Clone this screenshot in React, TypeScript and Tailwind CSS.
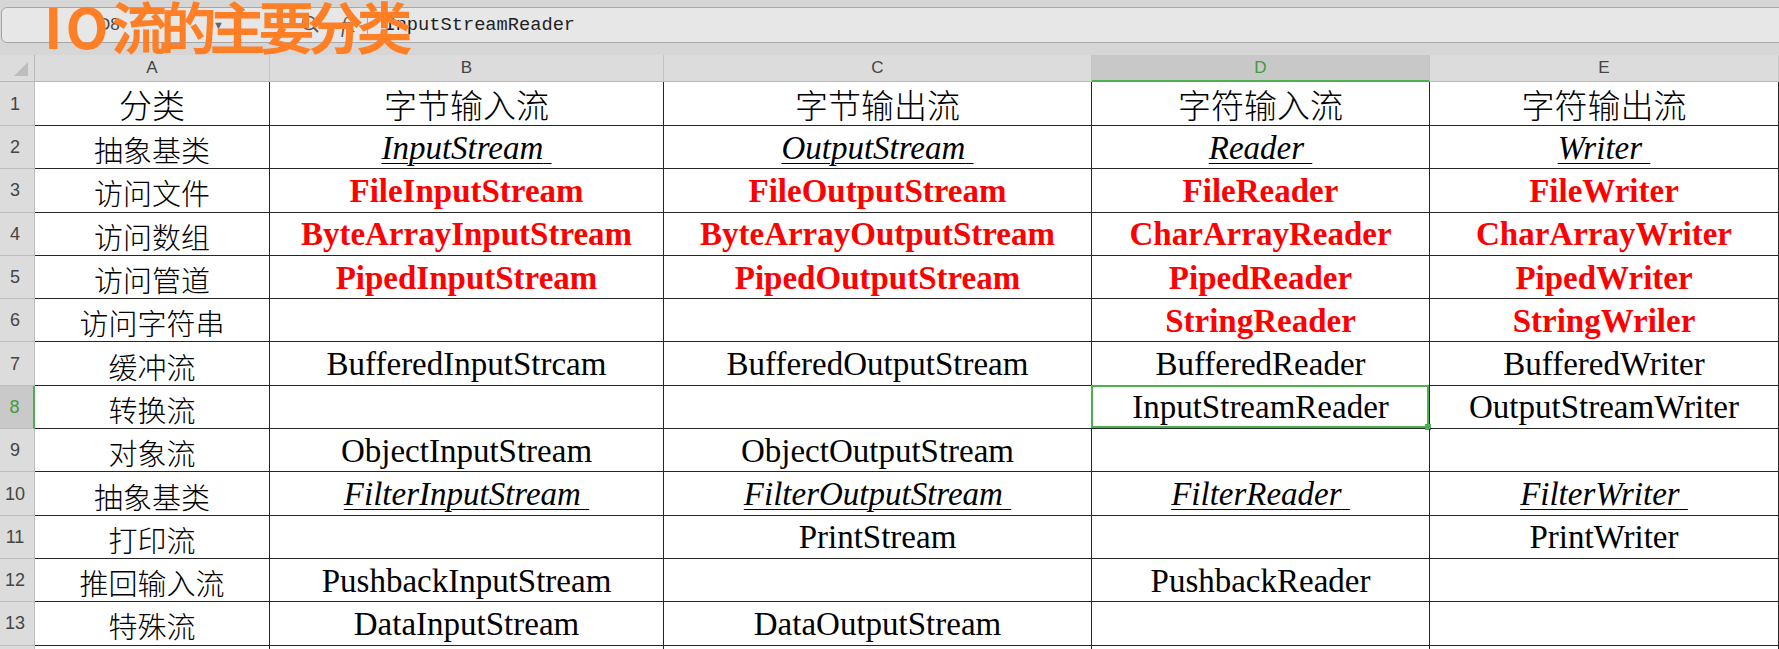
import React from "react";

type Cell = { t: string; s?: "red" | "ital" } | null;

// column widths (A..E) in the sheet
const COLS = ["w-[235px]", "w-[394px]", "w-[428px]", "w-[338px]", "w-[349px]"];

const HEAD = ["分类", "字节输入流", "字节输出流", "字符输入流", "字符输出流"];

const ROWS: Cell[][] = [
  [{ t: "抽象基类" }, { t: "InputStream", s: "ital" }, { t: "OutputStream", s: "ital" }, { t: "Reader", s: "ital" }, { t: "Writer", s: "ital" }],
  [{ t: "访问文件" }, { t: "FileInputStream", s: "red" }, { t: "FileOutputStream", s: "red" }, { t: "FileReader", s: "red" }, { t: "FileWriter", s: "red" }],
  [{ t: "访问数组" }, { t: "ByteArrayInputStream", s: "red" }, { t: "ByteArrayOutputStream", s: "red" }, { t: "CharArrayReader", s: "red" }, { t: "CharArrayWriter", s: "red" }],
  [{ t: "访问管道" }, { t: "PipedInputStream", s: "red" }, { t: "PipedOutputStream", s: "red" }, { t: "PipedReader", s: "red" }, { t: "PipedWriter", s: "red" }],
  [{ t: "访问字符串" }, null, null, { t: "StringReader", s: "red" }, { t: "StringWriler", s: "red" }],
  [{ t: "缓冲流" }, { t: "BufferedInputStrcam" }, { t: "BufferedOutputStream" }, { t: "BufferedReader" }, { t: "BufferedWriter" }],
  [{ t: "转换流" }, null, null, { t: "InputStreamReader" }, { t: "OutputStreamWriter" }],
  [{ t: "对象流" }, { t: "ObjectInputStream" }, { t: "ObjectOutputStream" }, null, null],
  [{ t: "抽象基类" }, { t: "FilterInputStream", s: "ital" }, { t: "FilterOutputStream", s: "ital" }, { t: "FilterReader", s: "ital" }, { t: "FilterWriter", s: "ital" }],
  [{ t: "打印流" }, null, { t: "PrintStream" }, null, { t: "PrintWriter" }],
  [{ t: "推回输入流" }, { t: "PushbackInputStream" }, null, { t: "PushbackReader" }, null],
  [{ t: "特殊流" }, { t: "DataInputStream" }, { t: "DataOutputStream" }, null, null],
];

function CellText({ c, first }: { c: Cell; first: boolean }) {
  if (!c) return null;
  if (first) return <span className="pt-[3px] font-['Noto_Sans_CJK_SC',sans-serif] text-[29px] font-light">{c.t}</span>;
  if (c.s === "red") return <span className="font-bold text-[#ff0000]">{c.t}</span>;
  if (c.s === "ital")
    return (
      <span className="italic underline decoration-1 underline-offset-[4px]">
        {c.t}
        {"\u00a0"}
      </span>
    );
  return <span>{c.t}</span>;
}

export default function App() {
  return (
    <div className="relative h-[649px] w-[1779px] overflow-hidden bg-white font-['Liberation_Sans',sans-serif]">
      {/* formula bar */}
      <div className="flex h-[55px] items-start bg-[#d6d6d6] pt-[7px]">
        <div className="ml-px flex h-[36px] w-[236px] items-center rounded-md border border-[#a5a5a5] bg-[#e7e7e7] pl-[96px] pr-3 text-[17px] text-[#444]">
          <span className="flex-1">D8</span>
          <span className="text-[11px] text-[#666]">▼</span>
        </div>
        <div className="flex h-[36px] flex-1 items-center border-y border-[#a9a9a9] bg-[#e7e7e7]">
          <svg width="20" height="20" viewBox="0 0 20 20" className="ml-[64px]">
            <circle cx="8" cy="8" r="6.5" fill="none" stroke="#555" strokeWidth="1.5" />
            <path d="M12.5 12.5 L17 17" stroke="#555" strokeWidth="1.8" />
          </svg>
          <span className="ml-[20px] font-['Liberation_Serif',serif] text-[20px] italic text-[#555]">fx</span>
          <div className="ml-[12px] h-[26px] w-px bg-[#a9a9a9]" />
          <span className="ml-[16px] font-['Liberation_Mono',monospace] text-[18.7px] text-[#222]">InputStreamReader</span>
        </div>
      </div>

      {/* column header */}
      <div className="flex h-[27px] text-[17px] text-[#444]">
        <div className="relative w-[35px] border-r border-b border-[#b8b8b8] bg-[#dcdcdc]">
          <svg width="14" height="14" viewBox="0 0 14 14" className="absolute right-[6px] bottom-[5px]">
            <polygon points="14,0 14,14 0,14" fill="#bdbdbd" />
          </svg>
        </div>
        {["A", "B", "C", "D", "E"].map((h, i) => (
          <div
            key={h}
            className={`${COLS[i]} flex items-center justify-center border-r border-[#c4c4c4] ${
              h === "D" ? "border-b-2 border-b-[#4caf50] bg-[#c8c8c8] text-[#3f9b3f]" : "border-b border-b-[#b8b8b8] bg-[#dcdcdc]"
            }`}
          >
            {h}
          </div>
        ))}
      </div>

      {/* sheet */}
      <div className="font-['Liberation_Serif','Noto_Sans_CJK_SC',serif] text-[33px] leading-none text-black">
        <div className="flex h-[44px]">
          <div className="flex w-[35px] items-center justify-center border-r border-b border-[#bcbcbc] bg-[#dcdcdc] pr-1 font-['Liberation_Sans',sans-serif] text-[18px] text-[#444]">
            1
          </div>
          {HEAD.map((h, i) => (
            <div key={i} className={`${COLS[i]} flex items-center justify-center border-r border-b border-[#262626] pt-[2px] font-['Noto_Sans_CJK_SC',sans-serif] text-[33px] font-light`}>
              {h}
            </div>
          ))}
        </div>
        {ROWS.map((row, r) => {
          const n = r + 2;
          const sel = n === 8;
          return (
            <div key={n} className="flex h-[43.3px]">
              <div
                className={`flex w-[35px] items-center justify-center border-b border-[#bcbcbc] pr-1 font-['Liberation_Sans',sans-serif] text-[18px] ${
                  sel ? "border-r-2 border-r-[#4caf50] bg-[#c9c9c9] text-[#3f9b3f]" : "border-r bg-[#dcdcdc] text-[#444]"
                }`}
              >
                {n}
              </div>
              {row.map((c, i) => (
                <div key={i} className={`${COLS[i]} relative flex items-center justify-center border-r border-b border-[#262626] pt-[2px]`}>
                  <CellText c={c} first={i === 0} />
                  {sel && i === 3 && (
                    <div className="absolute -top-px -left-px h-[calc(100%+1px)] w-[calc(100%+1px)] border-2 border-[#4caf50]">
                      <div className="absolute -right-[4px] -bottom-[4px] h-[6px] w-[6px] bg-[#4caf50]" />
                    </div>
                  )}
                </div>
              ))}
            </div>
          );
        })}
        <div className="flex h-[10px]">
          <div className="w-[35px] border-r border-[#bcbcbc] bg-[#dcdcdc]" />
          {COLS.map((w) => (
            <div key={w} className={`${w} border-r border-[#262626]`} />
          ))}
        </div>
      </div>

      {/* title overlay */}
      <div className="absolute top-[-3px] left-[44px] font-['Noto_Sans_CJK_SC',sans-serif] text-[56px] font-bold leading-none text-[#ff7f27]">
        <span className="tracking-[3px]">IO</span>
        <span className="tracking-[-7px]">流的主要分类</span>
      </div>
    </div>
  );
}
